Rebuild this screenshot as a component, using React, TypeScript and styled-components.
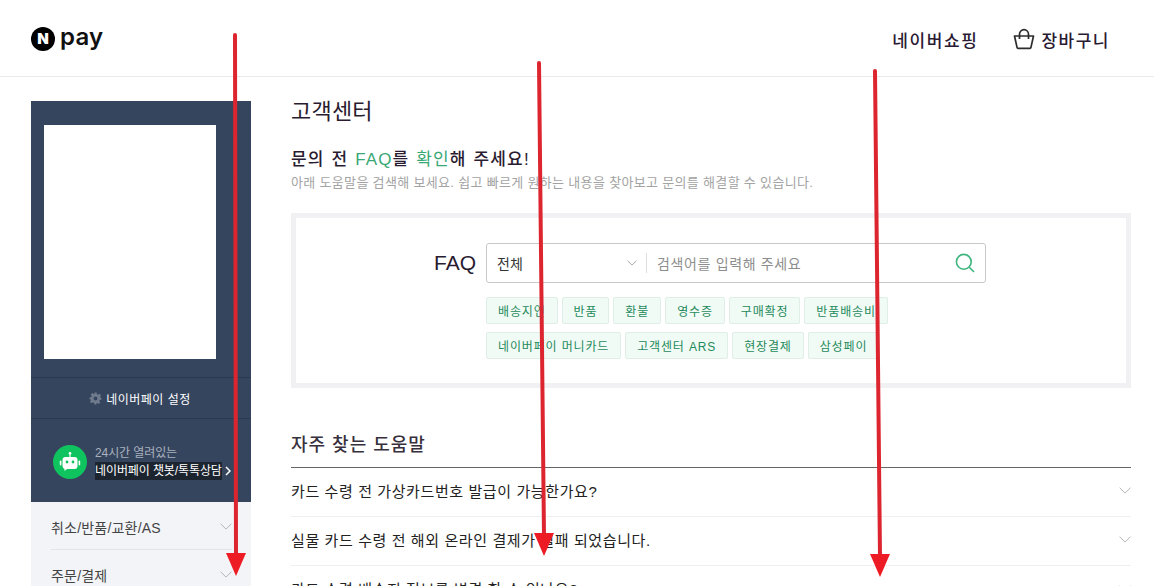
import styled, { createGlobalStyle } from "styled-components";
import { Fragment } from "react";

const GlobalStyle = createGlobalStyle`
  * {
    box-sizing: border-box;
  }

  html, body {
    margin: 0;
    height: 586px;
    overflow: hidden;
    background: #fff;
    color: #222;
    font-family: "Liberation Sans", "Noto Sans CJK KR", sans-serif;
  }
`;

const Page = styled.div`
  position: relative;
  width: 1154px;
  height: 586px;
  overflow: hidden;
`;

const Header = styled.header`
  height: 77px;
  padding: 0 44px 0 31px;
  display: flex;
  align-items: center;
  justify-content: space-between;
  border-bottom: 1px solid #e9e9eb;
`;

const Logo = styled.div`
  display: flex;
  align-items: center;
  gap: 5px;
  margin-top: 1px;
`;

const LogoMark = styled.span`
  width: 24px;
  height: 24px;
  border-radius: 50%;
  background: #000;
  color: #fff;
  display: flex;
  align-items: center;
  justify-content: center;
  font: 900 15px/1 Inter, "Liberation Sans", sans-serif;
`;

const LogoText = styled.span`
  font: 600 24px/24px Inter, "Liberation Sans", sans-serif;
  color: #111;
  margin-top: -3px;
  letter-spacing: 0.2px;
`;

const HeaderNav = styled.nav`
  display: flex;
  align-items: center;
  padding-top: 2px;
`;

const ShopLink = styled.a`
  font-size: 17px;
  font-weight: 500;
  letter-spacing: 1.6px;
  color: #2b1a33;
  margin-right: 35px;
`;

const CartLink = styled.a`
  display: flex;
  align-items: center;
  gap: 6px;
  font-size: 17px;
  font-weight: 500;
  letter-spacing: 1.5px;
  color: #2b1a33;
`;

const Layout = styled.div`
  display: flex;
  gap: 40px;
  padding: 24px 23px 0 31px;
`;

const Sidebar = styled.aside`
  width: 220px;
  flex: none;
  background: #f3f4f8;
`;

const ProfilePanel = styled.div`
  background: #36455e;
  height: 401px;
  padding-top: 24px;
`;

const Banner = styled.div`
  width: 172px;
  height: 234px;
  margin: 0 13px 0 13px;
  background: #fff;
`;

const SettingsRow = styled.div`
  margin-top: 18px;
  height: 42px;
  display: flex;
  align-items: center;
  justify-content: center;
  gap: 4px;
  padding-right: 2px;
  border-top: 1px solid #2a3850;
  border-bottom: 1px solid #2a3850;
  color: #fff;
  font-size: 12px;
  letter-spacing: 0.5px;
`;

const ChatRow = styled.div`
  display: flex;
  align-items: center;
  gap: 8px;
  padding: 25px 0 0 22px;
`;

const ChatBadge = styled.span`
  width: 34px;
  height: 34px;
  border-radius: 50%;
  background: #0fc45f;
  flex: none;
  display: flex;
  align-items: center;
  justify-content: center;
`;

const ChatText = styled.div`
  display: flex;
  flex-direction: column;
  font-size: 12px;
  line-height: 18px;
  letter-spacing: -0.1px;
`;

const ChatHint = styled.span`
  color: #aab2bf;
`;

const ChatLink = styled.span`
  display: flex;
  align-items: center;
  gap: 3px;
  color: #fff;
  white-space: nowrap;
`;

const ChatLabel = styled.span`
  background: #1c2430;
`;

const SideMenu = styled.ul`
  list-style: none;
  margin: 0;
  padding: 0 19px 0 20px;
`;

const SideItem = styled.li`
  height: 48px;
  display: flex;
  align-items: center;
  justify-content: space-between;
  padding-top: 3px;
  font-size: 14px;
  letter-spacing: 0.2px;
  color: #444;
  border-bottom: 1px solid #e3e4e8;
`;

const Main = styled.main`
  flex: 1;
  min-width: 0;
`;

const Title = styled.h1`
  margin: 0;
  font-size: 22px;
  line-height: 16px;
  padding-top: 3px;
  font-weight: 400;
  letter-spacing: 0.2px;
  color: #2a1c30;
`;

const Lead = styled.h2`
  margin: 28px 0 0;
  font-size: 17px;
  line-height: 24px;
  font-weight: 500;
  letter-spacing: 1.15px;
  word-spacing: 1px;
  color: #2a1c30;
`;

const Accent = styled.em`
  font-style: normal;
  font-weight: 400;
  color: #3aa874;
`;

const Sub = styled.p`
  margin: 2px 0 0;
  font-size: 13px;
  line-height: 18px;
  letter-spacing: 0.33px;
  color: #a3a3a3;
`;

const SearchPanel = styled.section`
  margin-top: 21px;
  height: 175px;
  border: 5px solid #f1f1f3;
  padding: 25px 0 0 138px;
`;

const SearchRow = styled.div`
  display: flex;
  align-items: center;
  gap: 10px;
`;

const SearchLabel = styled.span`
  font: 400 21px/40px "Liberation Sans", sans-serif;
  color: #2a1c30;
`;

const SearchBox = styled.div`
  width: 500px;
  height: 40px;
  display: flex;
  align-items: center;
  border: 1px solid #c9c9c9;
  border-radius: 3px;
  padding: 0 10px;
`;

const SelectValue = styled.span`
  width: 130px;
  font-size: 14px;
  color: #333;
`;

const Divider = styled.span`
  width: 1px;
  height: 20px;
  margin: 0 10px 0 9px;
  background: #dedede;
`;

const Placeholder = styled.span`
  flex: 1;
  font-size: 14px;
  letter-spacing: 0.65px;
  color: #8d8d8d;
`;

const TagArea = styled.div`
  margin: 14px 0 0 52px;
  display: flex;
  flex-direction: column;
  gap: 8px;
`;

const TagRow = styled.div`
  display: flex;
  gap: 4px;
`;

const Tag = styled.span`
  height: 27px;
  padding: 0 11px;
  display: flex;
  align-items: center;
  font-size: 12px;
  letter-spacing: 0.85px;
  color: #1f8a5b;
  background: #f1fbf6;
  border: 1px solid #dfeee7;
  border-radius: 2px;
  white-space: nowrap;
`;

const FaqTitle = styled.h3`
  margin: 44px 0 0;
  font-size: 18px;
  line-height: 26px;
  font-weight: 500;
  letter-spacing: 1px;
  color: #37303c;
`;

const FaqList = styled.ul`
  list-style: none;
  margin: 9px 0 0;
  padding: 0;
  border-top: 1px solid #666;
`;

const FaqItem = styled.li`
  height: 49px;
  padding-bottom: 3px;
  display: flex;
  align-items: center;
  justify-content: space-between;
  border-bottom: 1px solid #efefef;
  font-size: 15px;
  letter-spacing: 0.6px;
  color: #222;
`;

const Annotations = styled.svg`
  position: absolute;
  inset: 0;
  pointer-events: none;
`;

const Chevron = ({ size = 12, color = "#b5b5b5" }: { size?: number; color?: string }) => (
  <svg width={size} height={size * 0.6} viewBox="0 0 12 7" fill="none">
    <path d="M.6.7 6 6l5.4-5.3" stroke={color} strokeWidth="1" />
  </svg>
);

const tagRows = [
  ["배송지연", "반품", "환불", "영수증", "구매확정", "반품배송비"],
  ["네이버페이 머니카드", "고객센터 ARS", "현장결제", "삼성페이"],
];

const faqs = [
  "카드 수령 전 가상카드번호 발급이 가능한가요?",
  "실물 카드 수령 전 해외 온라인 결제가 실패 되었습니다.",
  "카드 수령 배송지 정보를 변경 할 수 있나요?",
];

const arrows = [
  { x1: 235, y1: 35, x2: 236, y2: 576 },
  { x1: 539, y1: 63, x2: 544, y2: 556 },
  { x1: 875, y1: 71, x2: 880, y2: 577 },
];

export default function App() {
  return (
    <Page>
      <GlobalStyle />
      <Header>
        <Logo>
          <LogoMark>N</LogoMark>
          <LogoText>pay</LogoText>
        </Logo>
        <HeaderNav>
          <ShopLink>네이버쇼핑</ShopLink>
          <CartLink>
            <svg width="22" height="22" viewBox="0 0 22 22" fill="none" stroke="#2c2c2c" strokeWidth="1.7" strokeLinejoin="round">
              <path d="M1.5 8h19l-2.6 11.6a1 1 0 0 1-1 .8H5.1a1 1 0 0 1-1-.8z" />
              <path d="M6.5 11V6.2a4.5 4.5 0 0 1 9 0V11" />
            </svg>
            장바구니
          </CartLink>
        </HeaderNav>
      </Header>
      <Layout>
        <Sidebar>
          <ProfilePanel>
            <Banner />
            <SettingsRow>
              <svg width="13" height="13" viewBox="0 0 24 24" fill="#6f7b8d">
                <path
                  fillRule="evenodd"
                  d="M10 1h4l.7 3.2 1.9.8 2.8-1.8 2.8 2.8-1.8 2.8.8 1.9L23 10v4l-3.2.7-.8 1.9 1.8 2.8-2.8 2.8-2.8-1.8-1.9.8L14 23h-4l-.7-3.2-1.9-.8-2.8 1.8-2.8-2.8 1.8-2.8-.8-1.9L1 14v-4l3.2-.7.8-1.9-1.8-2.8 2.8-2.8 2.8 1.8 1.9-.8zM12 8.5a3.5 3.5 0 1 0 0 7 3.5 3.5 0 0 0 0-7z"
                />
              </svg>
              네이버페이 설정
            </SettingsRow>
            <ChatRow>
              <ChatBadge>
                <svg width="22" height="22" viewBox="0 0 22 22" fill="#fff">
                  <circle cx="11" cy="2.2" r="1.3" />
                  <rect x="10.4" y="2.5" width="1.2" height="4" />
                  <path d="M6.5 6h9a3 3 0 0 1 3 3v6a3 3 0 0 1-3 3H8l-2.5 2v-2.1A3 3 0 0 1 3.5 15V9a3 3 0 0 1 3-3z" />
                  <rect x="0.8" y="9.5" width="1.6" height="5" rx=".8" />
                  <rect x="19.6" y="9.5" width="1.6" height="5" rx=".8" />
                  <circle cx="8" cy="11" r="1.4" fill="#0fc45f" />
                  <circle cx="14" cy="11" r="1.4" fill="#0fc45f" />
                </svg>
              </ChatBadge>
              <ChatText>
                <ChatHint>24시간 열려있는</ChatHint>
                <ChatLink>
                  <ChatLabel>네이버페이 챗봇/톡톡상담</ChatLabel>
                  <svg width="6" height="10" viewBox="0 0 6 10" fill="none">
                    <path d="M1 1l4 4-4 4" stroke="#fff" strokeWidth="1.5" />
                  </svg>
                </ChatLink>
              </ChatText>
            </ChatRow>
          </ProfilePanel>
          <SideMenu>
            {["취소/반품/교환/AS", "주문/결제"].map((label) => (
              <SideItem key={label}>
                {label}
                <Chevron />
              </SideItem>
            ))}
          </SideMenu>
        </Sidebar>
        <Main>
          <Title>고객센터</Title>
          <Lead>
            문의 전 <Accent>FAQ</Accent>를 <Accent>확인</Accent>해 주세요!
          </Lead>
          <Sub>아래 도움말을 검색해 보세요. 쉽고 빠르게 원하는 내용을 찾아보고 문의를 해결할 수 있습니다.</Sub>
          <SearchPanel>
            <SearchRow>
              <SearchLabel>FAQ</SearchLabel>
              <SearchBox>
                <SelectValue>전체</SelectValue>
                <Chevron size={10} color="#999" />
                <Divider />
                <Placeholder>검색어를 입력해 주세요</Placeholder>
                <svg width="20" height="20" viewBox="0 0 20 20" fill="none" stroke="#3fb57f" strokeWidth="1.6">
                  <circle cx="8.8" cy="8.8" r="7.4" />
                  <path d="M14 14l5 5" />
                </svg>
              </SearchBox>
            </SearchRow>
            <TagArea>
              {tagRows.map((row, i) => (
                <TagRow key={i}>
                  {row.map((tag) => (
                    <Tag key={tag}>{tag}</Tag>
                  ))}
                </TagRow>
              ))}
            </TagArea>
          </SearchPanel>
          <FaqTitle>자주 찾는 도움말</FaqTitle>
          <FaqList>
            {faqs.map((q) => (
              <FaqItem key={q}>
                {q}
                <Chevron />
              </FaqItem>
            ))}
          </FaqList>
        </Main>
      </Layout>
      <Annotations width="1154" height="586" viewBox="0 0 1154 586">
        {arrows.map((a) => (
          <Fragment key={a.x1}>
            <line x1={a.x1} y1={a.y1} x2={a.x2} y2={a.y2 - 20} stroke="#dd2530" strokeWidth="4" strokeLinecap="round" />
            <polygon points={`${a.x2 - 10},${a.y2 - 23} ${a.x2 + 10},${a.y2 - 23} ${a.x2},${a.y2}`} fill="#ed1c24" />
          </Fragment>
        ))}
      </Annotations>
    </Page>
  );
}
